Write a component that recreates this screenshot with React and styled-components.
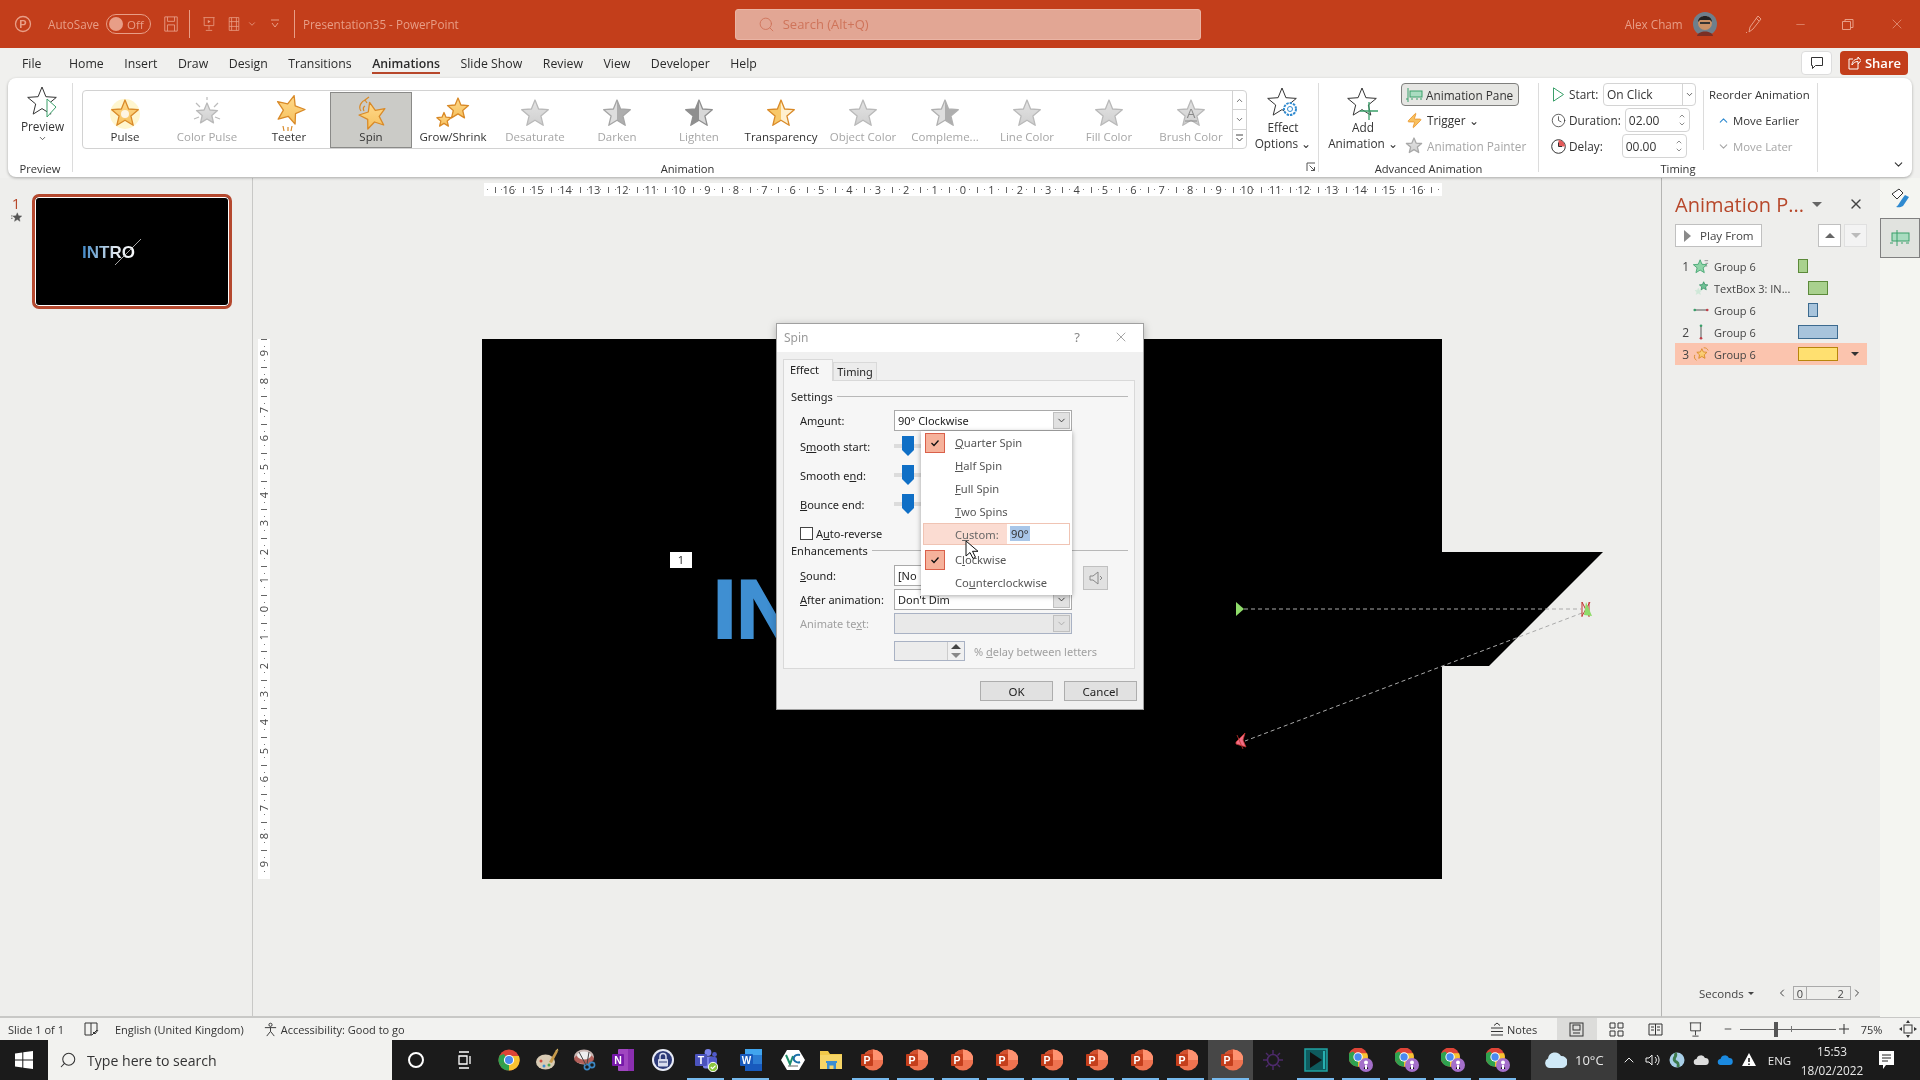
import React from 'react';
import styled, { createGlobalStyle } from 'styled-components';
import { Search, X, Minus, ChevronDown, ChevronUp, Clock, Zap, ChevronRight, ChevronLeft } from 'lucide-react';

const Global = createGlobalStyle`
  html, body { margin: 0; padding: 0; background: #f0f0ee; }
  body { font-family: "Open Sans", "Liberation Sans", sans-serif; font-size: 12px; color: #333; }
  * { box-sizing: border-box; }
`;

const Page = styled.div`
  width: 1920px; height: 1080px; display: flex; flex-direction: column; overflow: hidden;
  background: #f0f0ee; filter: blur(0.45px);
`;

/* ---------- title bar ---------- */
const TitleBar = styled.header`
  height: 48px; flex: none; background: #c33e1b; color: #e89e87; display: flex; align-items: center;
  font-size: 11.7px;
`;
const TitleSlot = styled.div`
  flex: none; display: flex; align-items: center; justify-content: center;
  margin-left: ${p => p.$ml || 0}px; width: ${p => p.$w ? p.$w + 'px' : 'auto'};
`;
const Toggle = styled.div`
  width: 45px; height: 20px; border: 1px solid #e89e87; border-radius: 10px; display: flex; align-items: center;
  padding-left: 2px; gap: 4px; font-size: 11.5px;
`;
const ToggleKnob = styled.i`width: 14px; height: 14px; border-radius: 50%; background: #e89e87;`;
const TitleSep = styled.div`width: 1px; height: 28px; background: #e89e87; flex: none; margin-left: ${p => p.$ml}px;`;
const SearchBox = styled.div`
  width: 466px; height: 31px; flex: none; margin-left: ${p => p.$ml}px; background: #e2a694; border: 1px solid #eab4a4;
  border-radius: 3px; display: flex; align-items: center; padding-left: 22px; gap: 8px; color: #cf745a; font-size: 13px;
`;

/* ---------- tabs ---------- */
const TabRow = styled.nav`height: 30px; flex: none; display: flex; align-items: flex-start; padding: 0 12px 0 22px; background: #f0f0ee;`;
const Tab = styled.div`
  flex: none; height: 26px; margin-right: 20.5px; padding-top: 7px; font-size: 12.3px; line-height: 18px; color: #2b2b2b;
  margin-left: ${p => p.$ml || 0}px; position: relative;
  font-weight: ${p => p.$active ? 600 : 400};
  border-bottom: ${p => p.$active ? '2px solid #b7472a' : 'none'};
`;
const CommentBtn = styled.div`
  width: 31px; height: 24px; margin: 3px 8px 0 auto; background: #fff; border: 1px solid #ddd; border-radius: 4px;
  display: flex; align-items: center; justify-content: center;
`;
const ShareBtn = styled.div`
  width: 68px; height: 24px; margin-top: 3px; background: #c33e1b; border-radius: 4px; color: #fff; font-size: 13px; font-weight: 600;
  display: flex; align-items: center; justify-content: center; gap: 4px;
`;

/* ---------- ribbon ---------- */
const Ribbon = styled.section`
  height: 99px; flex: none; margin: 0 8px; background: #fff; border-radius: 8px; box-shadow: 0 1px 3px rgba(0,0,0,.3);
  display: flex; padding: 5px 0; color: #333; position: relative;
`;
const Group = styled.div`
  flex: none; width: ${p => p.$w}px; display: flex; flex-direction: column;
  border-right: ${p => p.$last ? 'none' : '1px solid #dcdcdc'};
`;
const GroupBody = styled.div`flex: 1; display: flex; min-height: 0;`;
const GroupFoot = styled.div`height: 17px; flex: none; margin-bottom: -5px; display: flex; align-items: center; font-size: 11.2px;`;
const GroupName = styled.div`flex: 1; text-align: center;`;
const Launcher = styled.div`width: 16px; flex: none; display: flex; align-items: center; justify-content: flex-end; padding-right: 2px; margin-top: -3px;`;
const BigButton = styled.div`
  flex: none; width: ${p => p.$w}px; display: flex; flex-direction: column; align-items: center; line-height: 16px; font-size: 11.8px;
  padding-top: ${p => p.$pt ?? 3}px; padding-left: ${p => p.$pl || 0}px;
`;
const BigIcon = styled.svg`width: 36px; height: 36px; flex: none; margin-bottom: -3px;`;
const Gallery = styled.div`
  flex: none; width: 1165px; height: 59px; margin: 7px 0 0 9px; border: 1px solid #d2d2d2; border-radius: 4px; display: flex; align-items: stretch;
  padding-left: 1px;
`;
const GalleryItem = styled.div`
  flex: none; width: 82px; height: 56px; margin-top: 1px; display: flex; flex-direction: column; align-items: center; font-size: 11.5px; white-space: nowrap;
  color: ${p => p.$off ? '#a6a6a6' : '#333'};
  background: ${p => p.$on ? '#cbcbc7' : 'transparent'}; outline: ${p => p.$on ? '1px solid #8a8a88' : 'none'};
  outline-offset: -1px;
`;
const GalleryLabel = styled.span`margin-top: -3px; line-height: 16px;`;
const GalleryIcon = styled.svg`width: 38px; height: 38px; flex: none; margin-top: 2px;`;
const GalleryScroll = styled.div`margin-left: auto; width: 14px; display: flex; flex-direction: column;`;
const ScrollBtn = styled.div`
  flex: 1; display: flex; align-items: center; justify-content: center; border-left: 1px solid #d2d2d2;
  border-top: ${p => p.$first ? 'none' : '1px solid #d2d2d2'}; color: #444;
`;
const RibCol = styled.div`flex: none; display: flex; flex-direction: column; margin-top: -2px; width: ${p => p.$w ? p.$w + 'px' : 'auto'}; margin-left: ${p => p.$ml || 0}px; font-size: ${p => p.$fs || 11.8}px;`;
const RibRow = styled.div`
  height: 26px; flex: none; display: flex; align-items: center; gap: ${p => p.$gap ?? 4}px; white-space: nowrap;
  padding-left: ${p => p.$pl || 0}px; color: ${p => p.$off ? '#a6a6a6' : '#333'};
`;
const PaneBtn = styled.div`
  width: 118px; height: 23px; background: #e6e6e3; border: 1px solid #7f7f7d; border-radius: 4px; display: flex; align-items: center; padding-left: 3px; gap: 3px;
  font-size: 11.8px; margin-top: 1px;
`;
const RowLabel = styled.span`width: ${p => p.$w}px; flex: none;`;
const ComboBox = styled.div`
  width: 93px; height: 23px; border: 1px solid #d4d4d4; border-radius: 4px; display: flex; align-items: center; padding-left: 3px; font-size: 12px;
`;
const ComboCaret = styled.div`margin-left: auto; width: 13px; height: 100%; border-left: 1px solid #d4d4d4; display: flex; align-items: center; justify-content: center;`;
const SpinField = styled.div`
  width: 65px; height: 24px; border: 1px solid #d4d4d4; border-radius: 4px; display: flex; align-items: center; padding-left: 3px; font-size: 12px;
  margin-left: ${p => p.$ml || 0}px;
`;
const SpinArrows = styled.div`margin-left: auto; width: 13px; display: flex; flex-direction: column; align-items: center; color: #555;`;
const RibSep = styled.div`width: 1px; height: 60px; background: #dcdcdc; flex: none; margin: 7px 0 0 ${p => p.$ml || 0}px;`;
const CollapseSlot = styled.div`flex: 1; display: flex; align-items: flex-end; justify-content: flex-end; padding: 0 7px 1px 0;`;

/* ---------- main ---------- */
const Main = styled.main`height: 839px; margin-top: 1px; flex: none; display: flex; background: #eeeeec;`;
const ThumbPane = styled.aside`
  flex: none; width: 253px; border-right: 1px solid #c8c8c6; border-bottom: 1px solid #c8c8c6; display: flex; padding: 16px 0 0 10px; gap: 0;
`;
const ThumbNum = styled.div`width: 12px; display: flex; flex-direction: column; align-items: center; color: #b7472a; font-size: 15px; line-height: 18px;`;
const Thumb = styled.div`
  margin-left: 10px; width: 200px; height: 115px; border: 3px solid #b5492f; border-radius: 7px; background: #000; box-shadow: inset 0 0 0 1px #fff; position: relative;
  padding: 47px 0 0 47px; overflow: hidden;
`;
const ThumbTitle = styled.div`
  font-family: "Liberation Sans", sans-serif; font-weight: 700; font-size: 17px; line-height: 18px; width: 56px;
  background: linear-gradient(90deg, #3f88c8, #9cc0de 35%, #dfe6ee 60%, #fff); -webkit-background-clip: text; background-clip: text; color: transparent;
`;
const ThumbSlash = styled.svg`position: absolute; left: 80px; top: 40px; width: 30px; height: 30px;`;

const Stage = styled.section`
  flex: none; width: 1408px; position: relative; display: flex; flex-direction: column; border-bottom: 1px solid #c8c8c6;
`;
const HRuler = styled.div`
  width: 958px; height: 13px; margin: 5px 0 0 231px; background: #fff; display: flex; justify-content: center; overflow: hidden; flex: none;
`;
const HCell = styled.span`
  flex: 0 0 28.4px; text-align: center; font-size: 11px; line-height: 13px; color: #444;
  background:
    linear-gradient(#666,#666) 0 50%/1px 6px no-repeat,
    linear-gradient(#777,#777) 25% 50%/1px 1px no-repeat,
    linear-gradient(#777,#777) 75% 50%/1px 1px no-repeat;
`;
const StageRow = styled.div`display: flex; margin-top: 143px; padding-left: 5px;`;
const VRuler = styled.div`width: 12px; height: 540px; background: #fff; display: flex; flex-direction: column; flex: none;`;
const VCell = styled.span`
  flex: 0 0 28.42px; display: flex; align-items: center; justify-content: center; font-size: 11px; color: #444;
  background:
    linear-gradient(#666,#666) 50% 0/6px 1px no-repeat,
    linear-gradient(#777,#777) 50% 25%/1px 1px no-repeat,
    linear-gradient(#777,#777) 50% 75%/1px 1px no-repeat;
`;
const VNum = styled.span`writing-mode: vertical-rl; transform: rotate(180deg); line-height: 12px;`;
const Slide = styled.div`width: 960px; height: 540px; margin-left: 212px; background: #000; position: relative; flex: none;`;
const SlideOverflow = styled.svg`position: absolute; left: 0; top: 0; width: 1240px; height: 540px; overflow: visible; pointer-events: none;`;
const AnimTag = styled.div`
  position: absolute; left: 188px; top: 213px; width: 22px; height: 16px; background: #fff; color: #222; font-size: 11px; line-height: 16px; text-align: center;
`;
const SlideText = styled.div`
  position: absolute; left: 231px; top: 235px; white-space: nowrap;
  font-family: "Liberation Sans", sans-serif; font-weight: 700; font-size: 84px; line-height: 70px; color: #3f8fd2;
  -webkit-text-stroke: 2px #3f8fd2;
`;

/* ---------- dialog ---------- */
const Dialog = styled.div`
  position: absolute; left: 523px; top: 145px; width: 368px; height: 387px; background: #f0f0f0; border: 1px solid #a0a0a0; box-shadow: 0 2px 8px rgba(0,0,0,.25);
  font-family: "Noto Sans", sans-serif; font-size: 11px; color: #333; display: flex; flex-direction: column;
`;
const DlgTitle = styled.div`height: 28px; flex: none; background: #fff; display: flex; align-items: center; padding: 0 0 2px 7px; color: #9a9a9a; font-size: 12px;`;
const DlgHelp = styled.span`margin-left: auto; margin-right: 33px; font-size: 13px; color: #888;`;
const DlgClose = styled.span`margin-right: 14px; display: flex; color: #777;`;
const DlgTabs = styled.div`height: 22px; flex: none; margin-top: 7px; padding-left: 6px; display: flex; align-items: flex-end; position: relative; z-index: 1; margin-bottom: -1px;`;
const DlgTab = styled.div`
  height: ${p => p.$on ? 22 : 19}px; width: ${p => p.$on ? 50 : 44}px; background: ${p => p.$on ? '#f6f6f6' : '#ececec'};
  border: 1px solid #d9d9d9; border-bottom: ${p => p.$on ? 'none' : '1px solid #d9d9d9'}; display: flex; align-items: center; justify-content: center; color: #222;
  padding: ${p => p.$on ? '0 7px 3px 0' : '0'};
`;
const DlgPanel = styled.div`
  height: 289px; flex: none; margin: 0 8px 0 6px; background: #f6f6f6; border: 1px solid #d9d9d9; padding-top: 7px;
`;
const DlgHead = styled.div`height: 16px; margin-top: ${p => p.$mt || 0}px; display: flex; align-items: center; gap: 4px; padding: 0 6px 0 7px; color: #222;`;
const DlgLine = styled.i`flex: 1; height: 1px; background: #b8b8b8;`;
const FormRow = styled.div`
  height: ${p => p.$h}px; margin-top: ${p => p.$mt || 0}px; display: flex; align-items: center; padding-left: 16px; color: ${p => p.$off ? '#a0a0a0' : '#222'}; white-space: nowrap;
`;
const FormLabel = styled.span`width: 94px; flex: none;`;
const Key = styled.u``;
const DlgCombo = styled.div`
  width: 178px; height: 21px; flex: none; background: ${p => p.$off ? '#e9e9e9' : '#fff'}; border: 1px solid ${p => p.$off ? '#a9b2c4' : '#a9a9a9'}; display: flex; align-items: center; padding: 0 1px 0 3px;
`;
const DlgComboBtn = styled.div`
  margin-left: auto; width: 17px; height: 17px; background: ${p => p.$off ? '#e0e0e0' : '#e1e1e1'}; border: 1px solid #c0c0c0; display: flex; align-items: center; justify-content: center; color: ${p => p.$off ? '#aaa' : '#333'};
`;
const SliderTrack = styled.div`width: 178px; height: 19px; display: flex; align-items: center; padding-left: 8px; background: linear-gradient(#dcdcdc,#dcdcdc) 0 50%/100% 4px no-repeat;`;
const SliderThumb = styled.svg`width: 12px; height: 20px; flex: none;`;
const CheckBox = styled.i`width: 13px; height: 13px; background: #fff; border: 1px solid #444; flex: none; margin-right: 3px;`;
const SpeakerBtn = styled.div`width: 25px; height: 24px; margin: 4px 0 0 11px; background: #e1e1e1; border: 1px solid #c0c0c0; display: flex; align-items: center; justify-content: center; flex: none;`;
const SpinBox = styled.div`width: 71px; height: 20px; margin-left: 94px; border: 1px solid #a9b2c4; background: #ececec; display: flex; justify-content: flex-end; flex: none;`;
const SpinBtns = styled.div`width: 17px; background: #f0f0f0; border-left: 1px solid #ccc; display: flex; flex-direction: column; align-items: center; justify-content: space-around;`;
const DelayText = styled.span`margin-left: 9px; color: #a0a0a0;`;
const DlgFoot = styled.div`display: flex; justify-content: flex-end; gap: 11px; padding-right: 6px; margin-top: 12px;`;
const DlgBtn = styled.div`width: 73px; height: 20px; background: #e1e1e1; border: 1px solid #adadad; display: flex; align-items: center; justify-content: center; color: #222; font-size: 11.5px;`;
const Menu = styled.div`
  position: absolute; left: 144px; top: 107px; width: 151px; height: 164px; background: #fff; box-shadow: 0 1px 5px rgba(0,0,0,.35); z-index: 2; color: #555; font-size: 11.2px;
`;
const MenuRow = styled.div`height: 23px; display: flex; align-items: center; padding-left: 4px; margin-top: ${p => p.$mt || 0}px;`;
const CheckSlot = styled.div`
  width: 20px; height: 20px; flex: none; margin-right: 10px; display: flex; align-items: center; justify-content: center;
  background: ${p => p.$on ? '#f6b29b' : 'transparent'}; border: ${p => p.$on ? '1px solid #d9604a' : 'none'};
`;
const CustomRow = styled.div`height: 22px; margin: 0 2px; background: #fbdcd2; border: 1px solid #f0c4b4; display: flex; align-items: center; padding-left: 31px;`;
const CustomLabel = styled.span`width: 52px; flex: none; color: #666;`;
const CustomInput = styled.div`flex: 1; height: 100%; background: #fff; padding: 2px 0 0 3px; color: #333;`;
const Selected = styled.span`background: #a9c6e8; padding: 0 1px;`;
const Cursor = styled.svg`position: absolute; left: 188px; top: 216px; width: 16px; height: 22px; z-index: 3;`;

/* ---------- animation pane ---------- */
const AnimPane = styled.aside`
  flex: none; width: 219px; border-left: 1px solid #b5b5b3; border-bottom: 1px solid #c8c8c6; display: flex; flex-direction: column; padding: 15px 0 0 13px;
`;
const PaneHead = styled.div`height: 22px; display: flex; align-items: center; font-size: 20px; color: #b7472a; white-space: nowrap; width: 192px;`;
const PaneTri = styled.i`width: 0; height: 0; border-left: 5px solid transparent; border-right: 5px solid transparent; border-top: 5px solid #666; margin-left: 8px; flex: none;`;
const PaneClose = styled.span`margin-left: auto; margin-right: 3px; display: flex; color: #444;`;
const PlayRow = styled.div`display: flex; margin-top: 9px; width: 192px;`;
const PlayBtn = styled.div`width: 87px; height: 23px; background: #fff; border: 1px solid #c0c0c0; display: flex; align-items: center; padding-left: 8px; gap: 9px; color: #444; font-size: 11.6px;`;
const ArrowBtn = styled.div`
  width: 23px; height: 23px; margin-left: ${p => p.$ml}px; background: ${p => p.$off ? '#f3f3f3' : '#fff'}; border: 1px solid ${p => p.$off ? '#e0e0e0' : '#c0c0c0'}; display: flex; align-items: center; justify-content: center;
`;
const Tri = styled.i`
  width: 0; height: 0; border-left: 5px solid transparent; border-right: 5px solid transparent;
  border-${p => p.$up ? 'bottom' : 'top'}: 5px solid ${p => p.$c};
`;
const PlayTri = styled.i`width: 0; height: 0; border-top: 6px solid transparent; border-bottom: 6px solid transparent; border-left: 7px solid #8a8a8a;`;
const AnimList = styled.div`margin-top: 8px; width: 192px;`;
const AnimRow = styled.div`height: 22px; display: flex; align-items: center; background: ${p => p.$on ? '#fbc4ae' : 'transparent'}; color: #444; font-size: 12px; white-space: nowrap;`;
const AnimNum = styled.span`width: 18px; flex: none; text-align: right; padding-right: 4px;`;
const AnimIcon = styled.svg`width: 16px; height: 18px; flex: none;`;
const AnimName = styled.span`width: 84px; margin-left: 5px; flex: none; font-size: 11px;`;
const AnimBar = styled.i`
  width: ${p => p.$w}px; height: 14px; margin-left: ${p => p.$off}px; flex: none; background: ${p => p.$bg}; border: 1px solid ${p => p.$bd};
`;
const RowCaret = styled.i`margin-left: auto; margin-right: 8px; width: 0; height: 0; border-left: 4px solid transparent; border-right: 4px solid transparent; border-top: 4px solid #333;`;
const Timeline = styled.div`margin-top: auto; margin-bottom: 14px; padding-left: 24px; display: flex; align-items: center; color: #444; font-size: 11.5px; height: 18px;`;
const TimeCaret = styled.i`margin-left: 4px; width: 0; height: 0; border-left: 3px solid transparent; border-right: 3px solid transparent; border-top: 3px solid #444;`;
const TimeGap = styled.span`width: 22px; flex: none;`;
const TimeScale = styled.div`margin-left: 5px; width: 58px; height: 14px; border: 1px solid #aaa; display: flex; align-items: center; justify-content: space-between; padding: 0 6px 0 3px; background: linear-gradient(#aaa,#aaa) 12px 0/1px 100% no-repeat; font-size: 11px;`;
const RightStrip = styled.aside`flex: none; width: 40px; background: #f4f5f1; display: flex; flex-direction: column;`;
const StripSlot = styled.div`
  height: 40px; display: flex; align-items: center; justify-content: center;
  background: ${p => p.$on ? '#e1e3df' : 'transparent'}; outline: ${p => p.$on ? '1px solid #808080' : 'none'}; outline-offset: -1px;
`;

/* ---------- status bar ---------- */
const StatusBar = styled.footer`
  height: 23px; flex: none; border-top: 1px solid #c8c8c6; display: flex; align-items: center; background: #f2f2f0; font-size: 11px; color: #333; white-space: nowrap;
`;
const StatusSlot = styled.div`
  flex: none; display: flex; align-items: center; justify-content: center; gap: 3px; height: 100%;
  width: ${p => p.$w ? p.$w + 'px' : 'auto'}; margin-left: ${p => p.$ml || 0}px;
  background: ${p => p.$on ? '#dcdcda' : 'transparent'};
`;
const ZoomTrack = styled.div`width: 96px; height: 1px; background: #666; margin-left: 4px; flex: none; display: flex; align-items: center; padding-left: 34px; gap: 13px;`;
const ZoomThumb = styled.i`width: 4px; height: 15px; background: #555;`;
const ZoomMid = styled.i`width: 1px; height: 6px; background: #777;`;

/* ---------- taskbar ---------- */
const Taskbar = styled.div`height: 40px; flex: none; background: #1b1b1b; display: flex; align-items: stretch; color: #e8e8e8;`;
const StartBtn = styled.div`width: 48px; flex: none; display: flex; align-items: center; justify-content: center;`;
const TaskSearch = styled.div`
  width: 344px; flex: none; background: #f2f2ef; display: flex; align-items: center; padding-left: 11px; gap: 10px; color: #333; font-size: 14.1px;
`;
const SearchFlip = styled.span`display: flex; transform: scaleX(-1);`;
const TaskItem = styled.div`
  flex: none; width: ${p => p.$w}px; display: flex; align-items: center; justify-content: center; position: relative;
  background: ${p => p.$active ? '#474747' : 'transparent'};
  &::after {
    content: ''; display: ${p => p.$run ? 'block' : 'none'}; position: absolute; left: 4px; right: 4px; bottom: 0; height: 2px; background: #76b9ed;
  }
`;
const TaskIcon = styled.svg`width: 24px; height: 24px;`;
const Weather = styled.div`width: 86px; margin-left: 11px; flex: none; background: #3a3a3a; display: flex; align-items: center; padding-left: 12px; gap: 8px; font-size: 13px;`;
const TraySlot = styled.div`flex: none; width: ${p => p.$w}px; display: flex; align-items: center; justify-content: center; font-size: 11.5px;`;
const ClockBox = styled.div`flex: none; width: 68px; padding-top: 1px; display: flex; flex-direction: column; align-items: center; justify-content: center; font-size: 11.8px; line-height: 19px;`;

/* ---------- svg helpers ---------- */
const Defs = styled.svg`position: absolute; width: 0; height: 0;`;
const starPts = (cx, cy, R, r, rot = 0) => Array.from({ length: 10 }, (_, i) => {
  const a = (rot - 90 + i * 36) * Math.PI / 180, rad = i % 2 ? r : R;
  return `${(cx + rad * Math.cos(a)).toFixed(1)},${(cy + rad * Math.sin(a)).toFixed(1)}`;
}).join(' ');
const Star = ({ cx = 19, cy = 20, R = 14, r = 6.2, rot = 0, fill = 'url(#gold)', stroke = '#d98a28', sw = 1.3 }) => (
  <polygon points={starPts(cx, cy, R, r, rot)} fill={fill} stroke={stroke} strokeWidth={sw} strokeLinejoin="round" />
);
const GRAY = { fill: 'url(#gray)', stroke: '#b9b9b9' };
const galleryArt = {
  Pulse: <><circle cx="19" cy="20" r="15" fill="#fff6cf" /><Star /><circle cx="19" cy="20" r="4" fill="#fff" opacity=".8" /></>,
  'Color Pulse': <><Star {...GRAY} R={11} r={5} /><path d="M8 9l4 4M30 9l-4 4M6 25l5-2M32 25l-5-2M19 3v3" stroke="#bbb" strokeWidth="1.2" /></>,
  Teeter: <><Star rot={16} cy={16} cx={20} R={15} r={6.6} /><path d="M14 37l-1-5M21 37l1-5M18 37l0-4" stroke="#d98a28" strokeWidth="1.2" /></>,
  Spin: <><Star rot={-14} cx={21} cy={22} R={14} /><path d="M14 6c-5 1-8 7-5 11M15 9l-2-3 4-3M13 12c-2 1-2 3-1 5" stroke="#d98a28" fill="none" strokeWidth="1.2" /></>,
  'Grow/Shrink': <><Star cx={24} cy={15} R={11} r={4.9} /><Star cx={10} cy={26} R={7.5} r={3.4} /></>,
  Desaturate: <Star {...GRAY} />,
  Darken: <><Star fill="url(#dark)" stroke="#a5a5a5" /></>,
  Lighten: <><Star fill="url(#lite)" stroke="#8f8f8f" /></>,
  Transparency: <Star fill="url(#trans)" />,
  'Object Color': <Star {...GRAY} />,
  'Compleme...': <Star fill="url(#dark)" stroke="#b0b0b0" />,
  'Line Color': <Star {...GRAY} />,
  'Fill Color': <Star {...GRAY} />,
  'Brush Color': <><Star {...GRAY} /><text x="19" y="24" fontSize="13" textAnchor="middle" fill="#8a8a8a" fontFamily="Liberation Sans">A</text><path d="M13 27h12" stroke="#8a8a8a" /></>,
};
const galleryNames = Object.keys(galleryArt);
const disabledNames = new Set(['Color Pulse', 'Desaturate', 'Darken', 'Lighten', 'Object Color', 'Compleme...', 'Line Color', 'Fill Color', 'Brush Color']);

const Ico = styled.svg`width: ${p => p.$s || 16}px; height: ${p => p.$s || 16}px; flex: none; display: block;`;

const Chrome = () => (
  <>
    <circle cx="12" cy="12" r="10.5" fill="#de4437" />
    <path d="M12 12L2.9 17.2A10.5 10.5 0 0 1 2.4 7.8L6.7 6Z" fill="#2ea24f" />
    <path d="M12 12L2.9 17.2A10.5 10.5 0 0 0 12 22.5L17 12Z" fill="#2ea24f" />
    <path d="M12 12L12 22.5A10.5 10.5 0 0 0 21.9 8H12Z" fill="#f7c332" />
    <circle cx="12" cy="12" r="5.1" fill="#fff" /><circle cx="12" cy="12" r="4" fill="#4a8af0" />
  </>
);
const Ppt = () => (
  <>
    <circle cx="14" cy="12" r="10.5" fill="#ee7350" />
    <path d="M14 1.5A10.5 10.5 0 0 1 24.5 12H14Z" fill="#ff9270" />
    <path d="M14 1.5A10.5 10.5 0 0 0 5 17V12h9Z" fill="#d35230" />
    <rect x="2" y="6" width="12" height="12" rx="1" fill="#c43e1c" />
    <text x="8" y="15.6" fontSize="10.5" fontWeight="700" textAnchor="middle" fill="#fff" fontFamily="Liberation Sans">P</text>
  </>
);
const Badged = () => (
  <>
    <g transform="translate(-2 -2) scale(.92)"><Chrome /></g>
    <circle cx="17" cy="17" r="7" fill="#a46fca" /><circle cx="17" cy="14.5" r="2" fill="#fff" /><path d="M14.8 21c0-3.4 4.4-3.4 4.4 0z" fill="#111" /><rect x="16" y="17" width="2" height="4" fill="#fff" />
  </>
);
const taskIcons = {
  chrome: <Chrome />,
  paint: <><ellipse cx="10.5" cy="14" rx="9.5" ry="7.5" fill="#d8cbb4" /><circle cx="6" cy="13" r="1.5" fill="#d24b3e" /><circle cx="9" cy="18" r="1.5" fill="#3d8fd1" /><circle cx="14" cy="17" r="1.5" fill="#49a84f" /><path d="M14 14L21 2l2 1.5L17 15z" fill="#c79a4a" /><path d="M20.5 3l2-2.5 1 2z" fill="#e9c36a" /></>,
  snip: <><ellipse cx="12" cy="9" rx="10" ry="7.5" fill="#c9b7b3" /><ellipse cx="12" cy="11" rx="10" ry="5" fill="#a9433c" opacity=".75" /><ellipse cx="12" cy="7.5" rx="7" ry="4" fill="#eee" /><circle cx="15" cy="19" r="2.6" fill="none" stroke="#3b87c4" strokeWidth="1.6" /><circle cx="20" cy="17" r="2.6" fill="none" stroke="#3b87c4" strokeWidth="1.6" /><path d="M7 4l7 13M17 4l-2 12" stroke="#444" strokeWidth="1" /></>,
  onenote: <><rect x="7" y="1" width="16" height="22" rx="1" fill="#a046c0" /><rect x="17" y="1" width="6" height="22" fill="#8b2fb0" /><rect x="1" y="6" width="12" height="12" rx="1" fill="#7719aa" /><text x="7" y="15.8" fontSize="10.5" fontWeight="700" textAnchor="middle" fill="#fff" fontFamily="Liberation Sans">N</text></>,
  lock: <><circle cx="12" cy="12" r="11" fill="#e8ebf6" /><circle cx="12" cy="12" r="9" fill="#2d3a78" /><rect x="7" y="11" width="10" height="7.5" rx="1" fill="#d8dcee" /><path d="M9 11V8.5a3 3 0 0 1 6 0V11" stroke="#d8dcee" strokeWidth="1.5" fill="none" /><path d="M8 14h8" stroke="#2d3a78" /></>,
  teams: <><circle cx="14" cy="4.5" r="3.4" fill="#7b83eb" /><circle cx="20.5" cy="6.5" r="2.4" fill="#5059c9" /><rect x="9" y="8.5" width="11" height="12" rx="2" fill="#7b83eb" /><rect x="15" y="9" width="8" height="9" rx="2" fill="#5059c9" /><rect x="1" y="6" width="12" height="12" rx="1" fill="#4b53bc" /><text x="7" y="15.6" fontSize="10.5" fontWeight="700" textAnchor="middle" fill="#fff" fontFamily="Liberation Sans">T</text><circle cx="19" cy="19" r="4.7" fill="#8cc63f" stroke="#fff" /><path d="M16.8 19l1.7 1.7 3-3" stroke="#fff" fill="none" strokeWidth="1.2" /></>,
  word: <><rect x="6" y="1" width="17" height="22" rx="1" fill="#2b7cd3" /><rect x="6" y="1" width="17" height="6" fill="#41a5ee" /><rect x="6" y="16" width="17" height="7" fill="#185abd" /><rect x="1" y="6" width="13" height="12" rx="1" fill="#185abd" /><text x="7.5" y="15.6" fontSize="10" fontWeight="700" textAnchor="middle" fill="#fff" fontFamily="Liberation Sans">W</text></>,
  vk: <><polygon points="6,2 18,2 24,12 18,22 6,22 0,12" fill="#fff" /><path d="M5 7l4 9 3-8" stroke="#1f8f6a" strokeWidth="2" fill="none" /><path d="M19 7c-5-1-7 2-6 5 1 2 4 3 6 2" stroke="#1c6fa8" strokeWidth="2" fill="none" /><path d="M7 18h10" stroke="#666" /></>,
  folder: <><path d="M1 3h8l2 3h12v15H1z" fill="#f1c94a" /><rect x="1" y="7" width="22" height="14" fill="#f6d566" /><path d="M8 21v-6h9v6h-2.5v-3.5h-4V21z" fill="#3d8fd1" /><rect x="7" y="13" width="11" height="2" fill="#3d8fd1" /></>,
  ppt: <Ppt />,
  sun: <><circle cx="12" cy="12" r="5.5" fill="none" stroke="#4d2a6b" strokeWidth="1.6" /><path d="M12 2v4M12 18v4M2 12h4M18 12h4M5 5l2.5 2.5M16.5 16.5L19 19M19 5l-2.5 2.5M7.5 16.5L5 19" stroke="#4d2a6b" strokeWidth="1.4" /></>,
  cam: <><rect x="1" y="1" width="22" height="22" fill="#0e5b5e" stroke="#21a3a3" strokeWidth="1.5" /><polygon points="6,4 18,12 6,20" fill="#111" /><rect x="19" y="3" width="2" height="18" fill="#27b1b1" /></>,
  badge: <Badged />,
};
const taskList = [
  ['chrome', 42], ['paint', 34], ['snip', 40], ['onenote', 38], ['lock', 41], ['teams', 45, 1], ['word', 45, 1], ['vk', 40], ['folder', 35],
  ['ppt', 45, 1], ['ppt', 45, 1], ['ppt', 45, 1], ['ppt', 45, 1], ['ppt', 45, 1], ['ppt', 45, 1], ['ppt', 45, 1], ['ppt', 45, 1], ['ppt', 45, 1, 1],
  ['sun', 40], ['cam', 45, 1], ['badge', 46, 1], ['badge', 46, 1], ['badge', 45, 1], ['badge', 45, 1],
];

const hRuler = Array.from({ length: 35 }, (_, i) => Math.abs(i - 17));
const vRuler = Array.from({ length: 19 }, (_, i) => Math.abs(i - 9));
const tabs = ['Home', 'Insert', 'Draw', 'Design', 'Transitions', 'Animations', 'Slide Show', 'Review', 'View', 'Developer', 'Help'];

const faded = '#e89e87';
const Tick = () => <Ico $s={12} viewBox="0 0 12 12"><path d="M2.500 6l2.500 2.500 4.500-5" fill="none" stroke="#111" strokeWidth="1.300" /></Ico>;

export default function App() {
  return (
    <Page>
      <Global />
      <Defs>
        <defs>
          <linearGradient id="gold" x1="0" y1="0" x2="0" y2="1"><stop offset="0" stopColor="#ffd98a" /><stop offset="1" stopColor="#f6c15f" /></linearGradient>
          <linearGradient id="gray" x1="0" y1="0" x2="0" y2="1"><stop offset="0" stopColor="#e4e4e4" /><stop offset="1" stopColor="#cfcfcf" /></linearGradient>
          <linearGradient id="dark" x1="0" y1="0" x2="1" y2="0"><stop offset=".5" stopColor="#dedede" /><stop offset=".5" stopColor="#aeaeae" /></linearGradient>
          <linearGradient id="lite" x1="0" y1="0" x2="1" y2="0"><stop offset=".5" stopColor="#8f8f8f" /><stop offset=".5" stopColor="#d8d8d8" /></linearGradient>
          <linearGradient id="trans" x1="0" y1="0" x2="1" y2="0"><stop offset=".5" stopColor="#f8c86a" /><stop offset=".5" stopColor="#fff0cf" /></linearGradient>
        </defs>
      </Defs>

      <TitleBar>
        <TitleSlot $ml={14} $w={18}>
          <Ico $s={18} viewBox="0 0 18 18"><circle cx="9" cy="9" r="7.5" fill="none" stroke={faded} strokeWidth="1.3" /><text x="9" y="13" fontSize="11" fontWeight="700" textAnchor="middle" fill={faded} fontFamily="Liberation Sans">P</text></Ico>
        </TitleSlot>
        <TitleSlot $ml={16}>AutoSave</TitleSlot>
        <TitleSlot $ml={7}><Toggle><ToggleKnob />Off</Toggle></TitleSlot>
        <TitleSlot $ml={12}>
          <Ico $s={16} viewBox="0 0 16 18"><path d="M1 1h14v16H1zM4 1v5h8V1M4 17v-7h8v7" fill="none" stroke={faded} /></Ico>
        </TitleSlot>
        <TitleSep $ml={10} />
        <TitleSlot $ml={11}>
          <Ico $s={16} viewBox="0 0 16 20"><path d="M1 2h14M2 2v10h12V2M8 12v5M4 18h8" fill="none" stroke={faded} /><path d="M6.5 5l3.500 2-3.500 2z" fill={faded} /></Ico>
        </TitleSlot>
        <TitleSlot $ml={9}>
          <Ico $s={16} viewBox="0 0 14 20"><path d="M1 2h12v16H1zM4 2v16M10 2v16M1 7h12M1 13h12" fill="none" stroke={faded} /></Ico>
        </TitleSlot>
        <TitleSlot $ml={5}><ChevronDown size={10} color={faded} /></TitleSlot>
        <TitleSlot $ml={13}><Ico $s={10} viewBox="0 0 10 10"><path d="M1 1h8M2 4l3 4 3-4" fill="none" stroke={faded} /></Ico></TitleSlot>
        <TitleSep $ml={14} />
        <TitleSlot $ml={8}>Presentation35  -  PowerPoint</TitleSlot>
        <SearchBox $ml={276}><Search size={17} strokeWidth={1.3} />Search (Alt+Q)</SearchBox>
        <TitleSlot $ml={424}>Alex Cham</TitleSlot>
        <TitleSlot $ml={10}>
          <Ico $s={24} viewBox="0 0 24 24"><circle cx="12" cy="12" r="12" fill="#6e7f8c" /><circle cx="12" cy="11" r="7" fill="#c99066" /><path d="M5 10c0-8 14-8 14 0l-2-2H7z" fill="#222" /><rect x="7" y="10" width="10" height="2" fill="#333" /><path d="M4 24c1-6 15-6 16 0z" fill="#7a2f25" /></Ico>
        </TitleSlot>
        <TitleSlot $ml={27}>
          <Ico $s={20} viewBox="0 0 20 20"><path d="M14 2l3 3-8 10-4 3 1-5zM12 4l3 3" fill="none" stroke={faded} /><path d="M3 18l-1 1" stroke={faded} /></Ico>
        </TitleSlot>
        <TitleSlot $ml={30}><Minus size={13} color={faded} strokeWidth={1.2} /></TitleSlot>
        <TitleSlot $ml={34}>
          <Ico $s={13} viewBox="0 0 13 13"><path d="M1.5 3.5h8v8h-8zM4 3.5V1.5h8v8h-2.500" fill="none" stroke={faded} /></Ico>
        </TitleSlot>
        <TitleSlot $ml={35}><X size={16} color={faded} strokeWidth={1.1} /></TitleSlot>
      </TitleBar>

      <TabRow>
        <Tab>File</Tab>
        {tabs.map((t, i) => <Tab key={t} $ml={i === 0 ? 7 : 0} $active={t === 'Animations'}>{t}</Tab>)}
        <CommentBtn>
          <Ico $s={14} viewBox="0 0 14 14"><path d="M1.500 1.500h11v8h-7l-3 3v-3h-1z" fill="none" stroke="#333" /></Ico>
        </CommentBtn>
        <ShareBtn>
          <Ico $s={14} viewBox="0 0 14 14"><path d="M6 3H2v10h9V8M5 9c0-4 3-6 6-6V1l3 3.500L11 8V5.500C8 5.500 6 7 5 9z" fill="none" stroke="#fff" /></Ico>
          Share
        </ShareBtn>
      </TabRow>

      <Ribbon>
        <Group $w={65}>
          <GroupBody>
            <BigButton $w={64} $pt={2} $pl={5}>
              <BigIcon viewBox="0 0 36 36">
                <Star cx={17} cy={17} R={15} r={6.6} fill="#fff" stroke="#333" sw={1} />
                <polygon points="22,14 31,22 22,32" fill="#fff" stroke="#3aa06a" />
              </BigIcon>
              <span>Preview</span>
              <ChevronDown size={9} />
            </BigButton>
          </GroupBody>
          <GroupFoot><GroupName>Preview</GroupName></GroupFoot>
        </Group>

        <Group $w={1246}>
          <GroupBody>
            <Gallery>
              {galleryNames.map(n => (
                <GalleryItem key={n} $on={n === 'Spin'} $off={disabledNames.has(n)}>
                  <GalleryIcon viewBox="0 0 38 38">{galleryArt[n]}</GalleryIcon>
                  <GalleryLabel>{n}</GalleryLabel>
                </GalleryItem>
              ))}
              <GalleryScroll>
                <ScrollBtn $first><ChevronUp size={9} /></ScrollBtn>
                <ScrollBtn><ChevronDown size={9} /></ScrollBtn>
                <ScrollBtn><Ico $s={9} viewBox="0 0 9 9"><path d="M1 1h7M1.500 4l3 3 3-3" fill="none" stroke="#444" /></Ico></ScrollBtn>
              </GalleryScroll>
            </Gallery>
            <BigButton $w={70} $pl={2}>
              <BigIcon viewBox="0 0 36 36">
                <Star cx={17} cy={17} R={15} r={6.6} fill="#fff" stroke="#333" sw={1} />
                <circle cx="25" cy="23" r="6" fill="#fff" stroke="#2f8ad0" strokeWidth="2" strokeDasharray="2.400 1" />
                <circle cx="25" cy="23" r="2.500" fill="#fff" stroke="#2f8ad0" />
              </BigIcon>
              <span>Effect</span>
              <span>Options ⌄</span>
            </BigButton>
          </GroupBody>
          <GroupFoot>
            <GroupName>Animation</GroupName>
            <Launcher>
              <Ico $s={10} viewBox="0 0 10 10"><path d="M1 9V1h8M3.500 3.500L8.500 8.500M8.500 5v3.500H5" fill="none" stroke="#555" /></Ico>
            </Launcher>
          </GroupFoot>
        </Group>

        <Group $w={220}>
          <GroupBody>
            <BigButton $w={82} $pl={6}>
              <BigIcon viewBox="0 0 36 36">
                <Star cx={17} cy={17} R={15} r={6.6} fill="#fff" stroke="#333" sw={1} />
                <path d="M24 16v18M15 25h18" stroke="#3aa06a" strokeWidth="1.300" />
              </BigIcon>
              <span>Add</span>
              <span>Animation ⌄</span>
            </BigButton>
            <RibCol>
              <RibRow $gap={3}>
                <PaneBtn>
                  <Ico $s={18} viewBox="0 0 18 16"><rect x="5" y="4" width="12" height="6" fill="#a9dcc0" stroke="#3aa06a" /><path d="M3 1v14M1 12h2M6 12h2M11 12h2M15 12h2" stroke="#3aa06a" fill="none" /></Ico>
                  Animation Pane
                </PaneBtn>
              </RibRow>
              <RibRow $pl={5} $gap={4}>
                <Zap size={17} color="#e8932a" fill="#f8c05f" strokeWidth={1.2} />
                <span>Trigger ⌄</span>
              </RibRow>
              <RibRow $pl={4} $gap={4} $off>
                <Ico $s={18} viewBox="0 0 18 18"><Star cx={9} cy={9} R={8} r={3.6} {...GRAY} stroke="#a8a8a8" /></Ico>
                Animation Painter
              </RibRow>
            </RibCol>
          </GroupBody>
          <GroupFoot><GroupName>Advanced Animation</GroupName></GroupFoot>
        </Group>

        <Group $w={279}>
          <GroupBody>
            <RibCol $ml={12} $w={151}>
              <RibRow $gap={3}>
                <Ico $s={15} viewBox="0 0 14 18"><polygon points="1,1 13,9 1,17" fill="none" stroke="#3aa06a" strokeWidth="1.200" /></Ico>
                <RowLabel $w={31}>Start:</RowLabel>
                <ComboBox>On Click<ComboCaret><ChevronDown size={9} /></ComboCaret></ComboBox>
              </RibRow>
              <RibRow $gap={3}>
                <Clock size={15} strokeWidth={1.200} />
                <span>Duration:</span>
                <SpinField $ml={1}>02.00<SpinArrows><ChevronUp size={8} /><ChevronDown size={8} /></SpinArrows></SpinField>
              </RibRow>
              <RibRow $gap={3}>
                <Ico $s={15} viewBox="0 0 15 15"><circle cx="7.500" cy="7.500" r="6.800" fill="#fff" stroke="#333" /><path d="M7.500 1a6.500 6.500 0 0 1 6.500 6.500H7.500z" fill="#e45a5a" /><path d="M7.500 3.500v4H11" fill="none" stroke="#333" /></Ico>
                <span>Delay:</span>
                <SpinField $ml={16}>00.00<SpinArrows><ChevronUp size={8} /><ChevronDown size={8} /></SpinArrows></SpinField>
              </RibRow>
            </RibCol>
            <RibSep $ml={1} />
            <RibCol $ml={5} $w={100} $fs={11.4}>
              <RibRow>Reorder Animation</RibRow>
              <RibRow $pl={8} $gap={3}><ChevronUp size={13} color="#2f8ad0" />Move Earlier</RibRow>
              <RibRow $pl={8} $gap={3} $off><ChevronDown size={13} />Move Later</RibRow>
            </RibCol>
          </GroupBody>
          <GroupFoot><GroupName>Timing</GroupName></GroupFoot>
        </Group>

        <CollapseSlot><ChevronDown size={13} /></CollapseSlot>
      </Ribbon>

      <Main>
        <ThumbPane>
          <ThumbNum>
            1
            <Ico $s={11} viewBox="0 0 14 14"><Star cx={8} cy={7} R={6} r={2.700} fill="#555" stroke="#555" sw={.5} /><path d="M0 5h2M0 8h2" stroke="#555" /></Ico>
          </ThumbNum>
          <Thumb>
            <ThumbTitle>INTRO</ThumbTitle>
            <ThumbSlash viewBox="0 0 30 30"><path d="M0 28L26 2" stroke="#cfcfcf" strokeWidth=".8" /></ThumbSlash>
          </Thumb>
        </ThumbPane>

        <Stage>
          <HRuler>{hRuler.map((n, i) => <HCell key={i}>{n === 17 ? '' : n}</HCell>)}</HRuler>
          <StageRow>
            <VRuler>{vRuler.map((n, i) => <VCell key={i}><VNum>{n}</VNum></VCell>)}</VRuler>
            <Slide>
              <SlideText>IN</SlideText>
              <AnimTag>1</AnimTag>
              <SlideOverflow viewBox="0 0 1240 540">
                <polygon points="960,213 1121,213 1007,327 960,327" fill="#000" />
                <path d="M762 270H1099" stroke="#aaa" strokeWidth="1" strokeDasharray="4 3" />
                <path d="M1100 274L763 402" stroke="#aaa" strokeWidth="1" strokeDasharray="4 3" />
                <polygon points="754,263 762,270 754,277" fill="#8fdc6a" />
                <path d="M1100 263l7 14M1108 263l-8 14M1100 263v15M1107 263v15" stroke="#c0322f" strokeWidth="1" fill="none" />
                <polygon points="1104,263 1110,277 1102,276" fill="#8fdc6a" />
                <path d="M754 403l9-9-2 7 3 7-10-3z M755 396l6 14" fill="#f26d84" stroke="#c0322f" strokeWidth=".8" />
              </SlideOverflow>
            </Slide>
          </StageRow>
          <Dialog>
            <DlgTitle>Spin<DlgHelp>?</DlgHelp><DlgClose><X size={16} strokeWidth={1} /></DlgClose></DlgTitle>
            <DlgTabs><DlgTab $on>Effect</DlgTab><DlgTab>Timing</DlgTab></DlgTabs>
            <DlgPanel>
              <DlgHead>Settings<DlgLine /></DlgHead>
              <FormRow $h={21} $mt={6}>
                <FormLabel>Am<Key>o</Key>unt:</FormLabel>
                <DlgCombo>90° Clockwise<DlgComboBtn><ChevronDown size={11} /></DlgComboBtn></DlgCombo>
              </FormRow>
              {[['S', 'm', 'ooth start:', 30], ['Smooth e', 'n', 'd:', 28], ['', 'B', 'ounce end:', 30]].map(([a, k, b, h]) => (
                <FormRow key={b} $h={h}>
                  <FormLabel>{a}<Key>{k}</Key>{b}</FormLabel>
                  <SliderTrack>
                    <SliderThumb viewBox="0 0 12 20"><polygon points="0,0 12,0 12,14 6,20 0,14" fill="#0f6fc6" /></SliderThumb>
                  </SliderTrack>
                </FormRow>
              ))}
              <FormRow $h={20} $mt={4}><CheckBox />A<Key>u</Key>to-reverse</FormRow>
              <DlgHead $mt={-1}>Enhancements<DlgLine /></DlgHead>
              <FormRow $h={21} $mt={7}>
                <FormLabel><Key>S</Key>ound:</FormLabel>
                <DlgCombo>[No<DlgComboBtn><ChevronDown size={11} /></DlgComboBtn></DlgCombo>
                <SpeakerBtn>
                  <Ico $s={16} viewBox="0 0 16 16"><path d="M2 6h3l5-4v12l-5-4H2zM12 6l2 2-2 2" fill="none" stroke="#888" /></Ico>
                </SpeakerBtn>
              </FormRow>
              <FormRow $h={21} $mt={3}>
                <FormLabel><Key>A</Key>fter animation:</FormLabel>
                <DlgCombo>Don't Dim<DlgComboBtn><ChevronDown size={11} /></DlgComboBtn></DlgCombo>
              </FormRow>
              <FormRow $h={21} $mt={3} $off>
                <FormLabel>Animate te<Key>x</Key>t:</FormLabel>
                <DlgCombo $off><DlgComboBtn $off><ChevronDown size={11} /></DlgComboBtn></DlgCombo>
              </FormRow>
              <FormRow $h={20} $mt={7} $off>
                <SpinBox><SpinBtns><Tri $up $c="#444" /><Tri $c="#888" /></SpinBtns></SpinBox>
                <DelayText>% <Key>d</Key>elay between letters</DelayText>
              </FormRow>
            </DlgPanel>
            <DlgFoot><DlgBtn>OK</DlgBtn><DlgBtn>Cancel</DlgBtn></DlgFoot>
            <Menu>
              <MenuRow><CheckSlot $on><Tick /></CheckSlot><span><Key>Q</Key>uarter Spin</span></MenuRow>
              <MenuRow><CheckSlot /><span><Key>H</Key>alf Spin</span></MenuRow>
              <MenuRow><CheckSlot /><span><Key>F</Key>ull Spin</span></MenuRow>
              <MenuRow><CheckSlot /><span><Key>T</Key>wo Spins</span></MenuRow>
              <CustomRow><CustomLabel>C<Key>u</Key>stom:</CustomLabel><CustomInput><Selected>90°</Selected></CustomInput></CustomRow>
              <MenuRow $mt={3}><CheckSlot $on><Tick /></CheckSlot><span>C<Key>l</Key>ockwise</span></MenuRow>
              <MenuRow><CheckSlot /><span>Co<Key>u</Key>nterclockwise</span></MenuRow>
            </Menu>
            <Cursor viewBox="0 0 16 22"><path d="M1 1v15l4-3.500 3 6 2.500-1.200-3-6H13z" fill="#fff" stroke="#111" strokeWidth="1" /></Cursor>
          </Dialog>
        </Stage>

        <AnimPane>
          <PaneHead>Animation P...<PaneTri /><PaneClose><X size={16} strokeWidth={2} /></PaneClose></PaneHead>
          <PlayRow>
            <PlayBtn><PlayTri />Play From</PlayBtn>
            <ArrowBtn $ml={56}><Tri $up $c="#666" /></ArrowBtn>
            <ArrowBtn $off $ml={3}><Tri $c="#bbb" /></ArrowBtn>
          </PlayRow>
          <AnimList>
            <AnimRow>
              <AnimNum>1</AnimNum>
              <AnimIcon viewBox="0 0 18 18"><Star cx={8} cy={10} R={8} r={3.600} fill="#8fd4a8" stroke="#3aa06a" sw={.9} /><path d="M13 3h4M14 6h3M14 9h2" stroke="#777" strokeWidth=".8" /></AnimIcon>
              <AnimName>Group 6</AnimName>
              <AnimBar $w={10} $off={0} $bg="#a9d18e" $bd="#5c8a3a" />
            </AnimRow>
            <AnimRow>
              <AnimNum />
              <AnimIcon viewBox="0 0 18 18"><Star cx={12} cy={7} R={5} r={2.300} fill="#6fc194" stroke="#2f8a60" sw={.8} /><Star cx={6} cy={13} R={4} r={1.800} fill="#cfe8d8" stroke="#cfe8d8" sw={.6} /></AnimIcon>
              <AnimName>TextBox 3: IN...</AnimName>
              <AnimBar $w={20} $off={10} $bg="#a9d18e" $bd="#5c8a3a" />
            </AnimRow>
            <AnimRow>
              <AnimNum />
              <AnimIcon viewBox="0 0 18 18"><path d="M2 9h14" stroke="#444" /><circle cx="2" cy="9" r="1.500" fill="#3aa06a" /><circle cx="16" cy="9" r="1.500" fill="#c0404a" /></AnimIcon>
              <AnimName>Group 6</AnimName>
              <AnimBar $w={10} $off={10} $bg="#a8c4dc" $bd="#3c6a8f" />
            </AnimRow>
            <AnimRow>
              <AnimNum>2</AnimNum>
              <AnimIcon viewBox="0 0 18 18"><path d="M9 2v14" stroke="#444" /><circle cx="9" cy="2" r="1.500" fill="#3aa06a" /><circle cx="9" cy="16" r="1.500" fill="#c0404a" /></AnimIcon>
              <AnimName>Group 6</AnimName>
              <AnimBar $w={40} $off={0} $bg="#a8c4dc" $bd="#3c6a8f" />
            </AnimRow>
            <AnimRow $on>
              <AnimNum>3</AnimNum>
              <AnimIcon viewBox="0 0 18 18"><Star cx={10} cy={9} R={6} r={2.800} sw={1} /><path d="M12 2c3 0 4 1 5 3M2 10c-1 3 0 5 2 6" stroke="#d98a28" fill="none" /></AnimIcon>
              <AnimName>Group 6</AnimName>
              <AnimBar $w={40} $off={0} $bg="#ffe070" $bd="#b8860b" />
              <RowCaret />
            </AnimRow>
          </AnimList>
          <Timeline>
            Seconds<TimeCaret />
            <TimeGap />
            <ChevronLeft size={12} />
            <TimeScale><span>0</span><span>2</span></TimeScale>
            <ChevronRight size={12} />
          </Timeline>
        </AnimPane>

        <RightStrip>
          <StripSlot>
            <Ico $s={22} viewBox="0 0 22 22"><path d="M3 7l7-5 4 4-6 6z" fill="#fff" stroke="#333" /><path d="M16 8l4 2-6 9c-3 2-6 1-7 1 3-2 4-6 9-12z" fill="#2f8ad0" /></Ico>
          </StripSlot>
          <StripSlot $on>
            <Ico $s={22} viewBox="0 0 22 18"><rect x="3" y="4" width="17" height="8" fill="#a9dcc0" stroke="#3aa06a" /><path d="M8 1v16M1 14h3M12 14h2M17 14h3" stroke="#3aa06a" fill="none" /></Ico>
          </StripSlot>
        </RightStrip>
      </Main>

      <StatusBar>
        <StatusSlot $ml={8}>Slide 1 of 1</StatusSlot>
        <StatusSlot $ml={19}>
          <Ico $s={16} viewBox="0 0 16 16"><path d="M2 2h12v7l-5 5H2z" fill="none" stroke="#333" /><path d="M8 2v12M10 11l2 2 3-4" stroke="#333" fill="none" /></Ico>
        </StatusSlot>
        <StatusSlot $ml={16}>English (United Kingdom)</StatusSlot>
        <StatusSlot $ml={19}>
          <Ico $s={15} viewBox="0 0 16 16"><circle cx="8" cy="3" r="1.700" fill="none" stroke="#333" /><path d="M2 6h12M8 6v4M8 10l-4 5M8 10l4 5" stroke="#333" fill="none" /></Ico>
          Accessibility: Good to go
        </StatusSlot>
        <StatusSlot $ml={1089} $w={40}>
          <Ico $s={14} viewBox="0 0 14 14"><path d="M1 6h12M1 9.500h12M1 13h12M4 3.500L7 1l3 2.500" fill="none" stroke="#333" /></Ico>
          Notes
        </StatusSlot>
        <StatusSlot $ml={23} $w={40} $on>
          <Ico $s={15} viewBox="0 0 15 15"><rect x="1" y="1" width="13" height="13" fill="none" stroke="#333" /><rect x="4" y="3" width="7" height="5" fill="none" stroke="#333" /><path d="M4 11h7" stroke="#333" /></Ico>
        </StatusSlot>
        <StatusSlot $w={39}>
          <Ico $s={15} viewBox="0 0 15 15"><path d="M1 1h5v5H1zM9 1h5v5H9zM1 9h5v5H1zM9 9h5v5H9z" fill="none" stroke="#333" /></Ico>
        </StatusSlot>
        <StatusSlot $w={39}>
          <Ico $s={15} viewBox="0 0 15 15"><path d="M1 2h13v11H1zM7.500 2v11M3 5h3M3 8h3M9 5h3M9 8h3" fill="none" stroke="#333" /></Ico>
        </StatusSlot>
        <StatusSlot $w={41}>
          <Ico $s={15} viewBox="0 0 15 17"><path d="M1 1h13M2 1v9h11V1M7.500 10v5M4 16h7" fill="none" stroke="#333" /></Ico>
        </StatusSlot>
        <StatusSlot $ml={7}>
          <Minus size={10} />
          <ZoomTrack><ZoomThumb /><ZoomMid /></ZoomTrack>
        </StatusSlot>
        <StatusSlot $ml={3}><Ico $s={10} viewBox="0 0 10 10"><path d="M5 0v10M0 5h10" stroke="#333" /></Ico></StatusSlot>
        <StatusSlot $ml={12}>75%</StatusSlot>
        <StatusSlot $ml={17}>
          <Ico $s={18} viewBox="0 0 18 18"><rect x="5" y="5" width="8" height="8" fill="none" stroke="#333" /><path d="M9 0L7 3h4zM9 18l-2-3h4zM0 9l3-2v4zM18 9l-3-2v4z" fill="#333" /></Ico>
        </StatusSlot>
      </StatusBar>

      <Taskbar>
        <StartBtn>
          <Ico $s={18} viewBox="0 0 18 18"><path d="M0 2.500l7.300-1v7H0zM8.300 1.300L18 0v8.500H8.300zM0 9.500h7.300v7L0 15.500zM8.300 9.500H18V18l-9.700-1.300z" fill="#fff" /></Ico>
        </StartBtn>
        <TaskSearch><SearchFlip><Search size={18} strokeWidth={1.4} /></SearchFlip>Type here to search</TaskSearch>
        <TaskItem $w={48}><Ico $s={18} viewBox="0 0 18 18"><circle cx="9" cy="9" r="7" fill="none" stroke="#fff" strokeWidth="2" /></Ico></TaskItem>
        <TaskItem $w={48}><Ico $s={18} viewBox="0 0 18 18"><path d="M4 1h10M4 17h10M4 5h8v8H4zM15 5v8" fill="none" stroke="#fff" strokeWidth="1.300" /></Ico></TaskItem>
        {taskList.map(([k, w, run, active], i) => (
          <TaskItem key={i} $w={w} $run={!!run} $active={!!active}><TaskIcon viewBox="0 0 24 24">{taskIcons[k]}</TaskIcon></TaskItem>
        ))}
        <Weather>
          <Ico $s={24} viewBox="0 0 24 24"><path d="M7 20a5 5 0 0 1-2-9.500A7 7 0 0 1 18 8a6 6 0 0 1 1 12z" fill="#cfe9f7" /></Ico>
          10°C
        </Weather>
        <TraySlot $w={24}><ChevronUp size={16} color="#eee" strokeWidth={1.500} /></TraySlot>
        <TraySlot $w={23}><Ico $s={16} viewBox="0 0 16 16"><path d="M1 6h3l3-3v10l-3-3H1zM10 5a4 4 0 0 1 0 6M12 3a7 7 0 0 1 0 10" fill="none" stroke="#eee" /></Ico></TraySlot>
        <TraySlot $w={25}><Ico $s={16} viewBox="0 0 16 16"><circle cx="8" cy="8" r="7.500" fill="#a8cfe8" /><path d="M6 1c3 3-3 5 0 8 2 2 4 1 3 6" stroke="#3c7a4c" strokeWidth="3" fill="none" /></Ico></TraySlot>
        <TraySlot $w={24}><Ico $s={16} viewBox="0 0 16 16"><path d="M4 13a3 3 0 0 1-.5-6A4.500 4.500 0 0 1 12 6a3.500 3.500 0 0 1 .5 7z" fill="#ddd" /></Ico></TraySlot>
        <TraySlot $w={24}><Ico $s={16} viewBox="0 0 16 16"><path d="M4 13a3 3 0 0 1-.5-6A4.500 4.500 0 0 1 12 6a3.500 3.500 0 0 1 .5 7z" fill="#1b8ae0" /></Ico></TraySlot>
        <TraySlot $w={24}><Ico $s={16} viewBox="0 0 16 16"><path d="M8 1l7 13H1z" fill="#fff" /><path d="M8 6v4M8 11.500v1.500" stroke="#111" strokeWidth="1.500" /></Ico></TraySlot>
        <TraySlot $w={37}>ENG</TraySlot>
        <ClockBox><span>15:53</span><span>18/02/2022</span></ClockBox>
        <TraySlot $w={42}><Ico $s={20} viewBox="0 0 20 20"><path d="M2 1h15v14H9l-3 4v-4H2z" fill="#fff" /><path d="M5 5h9M5 8h9M5 11h6" stroke="#222" /></Ico></TraySlot>
      </Taskbar>
    </Page>
  );
}
